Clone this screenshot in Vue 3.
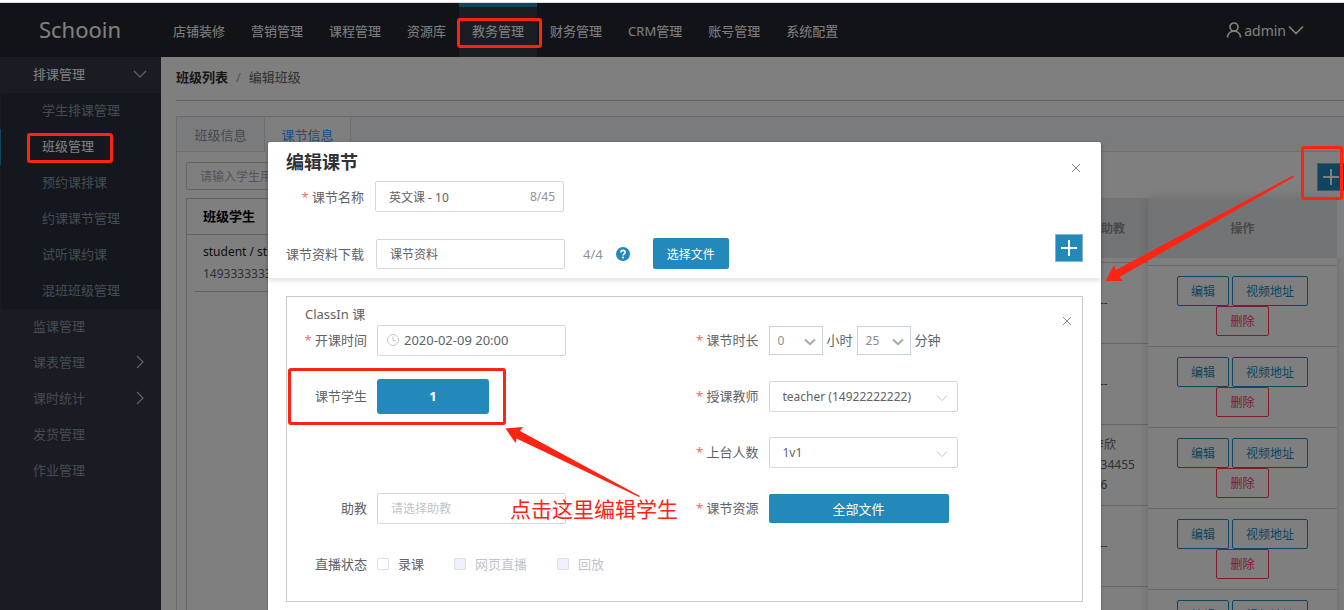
<script setup>
import { ref } from 'vue'

const navItems = ['店铺装修', '营销管理', '课程管理', '资源库', '教务管理', '财务管理', 'CRM管理', '账号管理', '系统配置']
const activeNav = '教务管理'

const subItems = ['学生排课管理', '班级管理', '预约课排课', '约课课节管理', '试听课约课', '混班班级管理']
const activeSub = '班级管理'
const sideItems = [
  { name: '监课管理', more: false },
  { name: '课表管理', more: true },
  { name: '课时统计', more: true },
  { name: '发货管理', more: false },
  { name: '作业管理', more: false },
]

const assistants = [[], [], ['韩梓欣', '15034455', '5566'], [], []]

const lessonName = ref('英文课 - 10')
const material = ref('课节资料')
const startTime = ref('2020-02-09 20:00')
const hours = ref('0')
const minutes = ref('25')
const teacher = ref('teacher (14922222222)')
const onStage = ref('1v1')
const assistant = ref('')
const record = ref(false)
</script>

<template>
  <div class="app">
    <div class="strip"></div>
    <div class="screen">
      <header class="top">
        <div class="logo">Schooin</div>
        <nav class="nav">
          <a v-for="n in navItems" :key="n" href="#" :class="{ on: n === activeNav }">{{ n }}</a>
        </nav>
        <button class="user" type="button">
          <svg width="16" height="16" viewBox="0 0 16 16" fill="none" stroke="currentColor" stroke-width="1.700">
            <circle cx="8" cy="5" r="4" />
            <path d="M1.500 15.500C1.500 11.500 4.500 9 8 9S14.500 11.500 14.500 15.500" />
          </svg>
          <span>admin</span>
          <svg width="16" height="10" viewBox="0 0 16 10" fill="none" stroke="currentColor" stroke-width="1.700">
            <path d="M1 1.500L8 8.500L15 1.500" />
          </svg>
        </button>
      </header>

      <div class="frame">
        <aside class="side">
          <a href="#" class="item open">
            <span>排课管理</span>
            <svg width="14" height="14" viewBox="0 0 14 14" fill="none" stroke="currentColor" stroke-width="1.200">
              <path d="M1 4L7 10L13 4" />
            </svg>
          </a>
          <div class="sub">
            <a v-for="s in subItems" :key="s" href="#" :class="{ on: s === activeSub }">{{ s }}</a>
          </div>
          <a v-for="s in sideItems" :key="s.name" href="#" class="item">
            <span>{{ s.name }}</span>
            <svg v-if="s.more" width="14" height="14" viewBox="0 0 14 14" fill="none" stroke="currentColor" stroke-width="1.200">
              <path d="M4 1L10 7L4 13" />
            </svg>
          </a>
        </aside>

        <main class="main">
          <div class="crumbs"><b>班级列表</b><i>/</i><span>编辑班级</span></div>
          <section class="tabs">
            <div class="tabbar">
              <button type="button">班级信息</button>
              <button type="button" class="on">课节信息</button>
            </div>
            <div class="pane">
              <div class="tools">
                <input type="text" class="search" placeholder="请输入学生用户名" aria-label="请输入学生用户名" />
                <button type="button" class="plus" aria-label="+">
                  <svg width="18" height="18" viewBox="0 0 18 18" stroke="currentColor" stroke-width="2"><path d="M9 1V17M1 9H17" /></svg>
                </button>
              </div>
              <div class="content">
                <div class="card">
                  <h3>班级学生</h3>
                  <div class="student">
                    <div>student / student</div>
                    <div class="phone">14933333333</div>
                  </div>
                </div>
                <table class="grid scroll">
                  <colgroup><col /><col class="c-assist" /></colgroup>
                  <thead><tr><th></th><th>助教</th></tr></thead>
                  <tbody>
                    <tr class="spacer"><td colspan="2"></td></tr>
                    <tr v-for="(a, i) in assistants" :key="i">
                      <td></td>
                      <td>
                        <div v-for="line in a" :key="line">{{ line }}</div>
                        <div v-if="!a.length" class="none">--</div>
                      </td>
                    </tr>
                  </tbody>
                </table>
                <table class="grid pinned">
                  <thead><tr><th>操作</th></tr></thead>
                  <tbody>
                    <tr class="spacer"><td></td></tr>
                    <tr v-for="(a, i) in assistants" :key="i">
                      <td>
                        <div class="acts">
                          <button type="button">编辑</button>
                          <button type="button">视频地址</button>
                          <button type="button" class="del">删除</button>
                        </div>
                      </td>
                    </tr>
                  </tbody>
                </table>
                <div class="gutter"></div>
              </div>
            </div>
          </section>
        </main>
      </div>

      <div class="overlay">
        <div class="modal" role="dialog" aria-labelledby="dlg-title">
          <div class="head">
            <div class="fields">
              <h2 id="dlg-title">编辑课节</h2>
              <div class="line">
                <label for="name"><em>*</em> 课节名称</label>
                <div class="box">
                  <input id="name" v-model="lessonName" type="text" class="ctl" />
                  <span class="count">8/45</span>
                </div>
              </div>
              <div class="line second">
                <label for="material">课节资料下载</label>
                <div class="box"><input id="material" v-model="material" type="text" class="ctl" /></div>
                <span class="total">4/4</span>
                <svg class="help" width="14" height="14" viewBox="0 0 14 14" fill="none">
                  <circle cx="7" cy="7" r="7" fill="#2289ba" />
                  <path d="M4.900 5.500C4.900 2.700 9.200 2.800 9.200 5.300C9.200 6.800 7 6.800 7 8.500" stroke="#fff" stroke-width="1.600" />
                  <circle cx="7" cy="10.600" r="1" fill="#fff" />
                </svg>
                <button type="button" class="solid pick">选择文件</button>
              </div>
            </div>
            <div class="sidecol">
              <button type="button" class="close" aria-label="×">
                <svg width="14" height="14" viewBox="0 0 14 14" fill="none" stroke="currentColor"><path d="M3 3L11 11M11 3L3 11" /></svg>
              </button>
              <button type="button" class="plus" aria-label="+">
                <svg width="18" height="18" viewBox="0 0 18 18" stroke="currentColor" stroke-width="2"><path d="M9 1V17M1 9H17" /></svg>
              </button>
            </div>
          </div>

          <div class="panel">
            <button type="button" class="close inner" aria-label="×">
              <svg width="14" height="14" viewBox="0 0 14 14" fill="none" stroke="currentColor"><path d="M3 3L11 11M11 3L3 11" /></svg>
            </button>
            <div class="kind">ClassIn 课</div>
            <div class="form">
              <div class="field">
                <label for="start"><em>*</em> 开课时间</label>
                <div class="box">
                  <svg class="clock" width="12" height="12" viewBox="0 0 12 12" fill="none" stroke="#c0c4cc">
                    <circle cx="6" cy="6" r="5.500" /><path d="M6 2.500V6.500H9" />
                  </svg>
                  <input id="start" v-model="startTime" type="text" class="ctl date" />
                </div>
              </div>
              <div class="field r">
                <label for="hours"><em>*</em> 课节时长</label>
                <div class="box small">
                  <select id="hours" v-model="hours" class="ctl"><option>0</option><option>1</option></select>
                  <svg width="12" height="8" viewBox="0 0 12 8" fill="none" stroke="#a6a9b0" stroke-width="2"><path d="M1 1.500L6 6.200L11 1.500" /></svg>
                </div>
                <label class="unit" for="hours">小时</label>
                <div class="box small">
                  <select id="minutes" v-model="minutes" class="ctl"><option>25</option><option>30</option></select>
                  <svg width="12" height="8" viewBox="0 0 12 8" fill="none" stroke="#a6a9b0" stroke-width="2"><path d="M1 1.500L6 6.200L11 1.500" /></svg>
                </div>
                <label class="unit" for="minutes">分钟</label>
              </div>

              <div class="field">
                <label for="students">课节学生</label>
                <button id="students" type="button" class="solid students">1</button>
              </div>
              <div class="field r">
                <label for="teacher"><em>*</em> 授课教师</label>
                <div class="box">
                  <select id="teacher" v-model="teacher" class="ctl"><option>teacher (14922222222)</option></select>
                  <svg width="12" height="8" viewBox="0 0 12 8" fill="none" stroke="#c0c4cc"><path d="M1 1.500L6 6.500L11 1.500" /></svg>
                </div>
              </div>

              <div class="field"></div>
              <div class="field r">
                <label for="stage"><em>*</em> 上台人数</label>
                <div class="box">
                  <select id="stage" v-model="onStage" class="ctl"><option>1v1</option></select>
                  <svg width="12" height="8" viewBox="0 0 12 8" fill="none" stroke="#c0c4cc"><path d="M1 1.500L6 6.500L11 1.500" /></svg>
                </div>
              </div>

              <div class="field">
                <label for="assistant">助教</label>
                <div class="box">
                  <select id="assistant" v-model="assistant" class="ctl empty"><option value="">请选择助教</option></select>
                  <svg width="12" height="8" viewBox="0 0 12 8" fill="none" stroke="#c0c4cc"><path d="M1 1.500L6 6.500L11 1.500" /></svg>
                </div>
              </div>
              <div class="field r">
                <label for="files"><em>*</em> 课节资源</label>
                <button id="files" type="button" class="solid files">全部文件</button>
              </div>

              <div class="field" role="group" aria-labelledby="live">
                <span id="live" class="lbl">直播状态</span>
                <div class="checks">
                  <label><input v-model="record" type="checkbox" />录课</label>
                  <label class="off"><input type="checkbox" disabled />网页直播</label>
                  <label class="off"><input type="checkbox" disabled />回放</label>
                </div>
              </div>
            </div>
          </div>
        </div>
      </div>
    </div>

    <div class="mark m-nav"></div>
    <div class="mark m-side"></div>
    <div class="mark m-add"></div>
    <div class="mark m-students"></div>
    <svg class="arrow a-add" width="190" height="108" viewBox="0 0 190 108" fill="#ff2314">
      <path d="M0.500 107L9 91L11 96L188 1.500L189 3L14.500 103L18 107Z" />
    </svg>
    <svg class="arrow a-students" width="136" height="72" viewBox="0 0 136 72" fill="#ff2314">
      <path d="M0.500 2.500L18 1L15 5L135 70L134 71L11.500 12.500L10.500 17Z" />
    </svg>
    <div class="hint">点击这里编辑学生</div>
  </div>
</template>

<style>
html,
body {
  margin: 0;
  overflow: hidden;
}
</style>

<style scoped>
* {
  box-sizing: border-box;
}
.app {
  position: relative;
  display: flex;
  flex-direction: column;
  height: 100vh;
  overflow: hidden;
  background: #fff;
  font-family: "Noto Sans", "Noto Sans CJK SC", sans-serif;
  font-size: 13px;
  line-height: 18px;
  color: #606266;
}
button,
input,
select {
  font-family: inherit;
  font-size: 12px;
  margin: 0;
}
button {
  padding: 0;
  border: 0;
  background: none;
  cursor: pointer;
  white-space: nowrap;
}
a {
  text-decoration: none;
  color: inherit;
}
svg {
  display: block;
  flex: none;
}
.strip {
  flex: none;
  height: 3px;
  border-bottom: 1px solid #dcdcdc;
}
.screen {
  position: relative;
  flex: 1;
  min-height: 0;
  display: flex;
  flex-direction: column;
  overflow: hidden;
}

/* top bar */
.top {
  flex: none;
  display: flex;
  align-items: stretch;
  height: 54px;
  background: #24272e;
  color: #fff;
}
.logo {
  width: 160px;
  text-align: center;
  font-size: 22px;
  line-height: 52px;
}
.nav {
  flex: 1;
  display: flex;
}
.nav a {
  padding: 0 13px;
  border-top: 4px solid transparent;
  line-height: 48px;
}
.nav a.on {
  background: #343c46;
  border-top-color: #2289ba;
}
.user {
  display: flex;
  align-items: center;
  gap: 2px;
  margin-right: 40px;
  color: #fff;
  font-size: 14px;
}

/* side menu */
.frame {
  flex: 1;
  min-height: 0;
  display: flex;
}
.side {
  flex: none;
  width: 161px;
  background: #363746;
  color: #8799a3;
}
.item {
  display: flex;
  justify-content: space-between;
  align-items: center;
  height: 36px;
  padding: 0 14px 2px 33px;
}
.item svg {
  color: #c4c8cc;
}
.item.open {
  color: #fff;
}
.sub {
  background: #28303c;
}
.sub a {
  display: block;
  padding: 0 0 2px 41px;
  border-left: 1px solid #363746;
  line-height: 34px;
}
.sub a.on {
  color: #fff;
  border-left-color: #2289ba;
}

/* page */
.main {
  flex: 1;
  min-width: 0;
  padding-left: 15px;
}
.crumbs {
  display: flex;
  height: 44px;
  line-height: 40px;
  border-bottom: 1px solid #c8c8c8;
  color: #606266;
}
.crumbs b {
  color: #303133;
}
.crumbs i {
  margin: 0 8px;
  font-style: normal;
  color: #a0a4ac;
}
.tabs {
  margin-top: 15px;
  border: 1px solid #d4d6dc;
  border-width: 1px 0 0 1px;
}
.tabbar {
  display: flex;
  height: 35px;
  background: #f5f7fa;
  border-bottom: 1px solid #dcdfe6;
}
.tabbar button {
  width: 87px;
  font-size: 13px;
  color: #909399;
}
.tabbar .on {
  height: 35px;
  background: #fff;
  color: #409eff;
  border: 1px solid #dcdfe6;
  border-width: 0 1px;
}
.pane {
  padding-left: 9px;
}
.tools {
  display: flex;
  justify-content: space-between;
  height: 46px;
  padding-top: 10px;
}
.search {
  width: 200px;
  height: 28px;
  padding: 0 13px;
  border: 1px solid #c8cad0;
  border-radius: 2px;
  background: #fff;
}
.search::placeholder {
  color: #a8abb2;
}
.plus {
  flex: none;
  display: grid;
  place-items: center;
  width: 28px;
  height: 28px;
  background: #2289ba;
  border: 1px solid #7fb4d2;
  color: #fff;
}
.tools .plus {
  margin: 1px -1px 0 0;
}
.content {
  display: grid;
  grid-template-columns: 300px 1fr 189px 7px;
  align-items: start;
}
.card {
  height: 480px;
  border: 1px solid #c8c8c8;
}
.card h3 {
  margin: 0;
  padding-left: 16px;
  border-bottom: 1px solid #c8c8c8;
  font-size: 13px;
  line-height: 35px;
  color: #000;
}
.student {
  margin-left: 7px;
  padding: 6px 9px;
  border-bottom: 1px solid #c8c8c8;
  font-size: 12px;
  line-height: 22px;
  color: #202124;
}
.phone {
  color: #606266;
}
.grid {
  width: 100%;
  border-collapse: separate;
  border-spacing: 0;
  table-layout: fixed;
  font-size: 12px;
  line-height: 20px;
  background: #fff;
}
.grid th {
  height: 60px;
  padding: 2px 0 0;
  background: #e6e8eb;
  color: #909399;
}
.grid td {
  height: 81px;
  padding: 0 2px;
  border-top: 1px solid #d0d0d0;
}
.grid .spacer td {
  border: 0;
}
.scroll .spacer td {
  height: 4px;
}
.pinned .spacer td {
  height: 7px;
}
.c-assist {
  width: 70px;
}
.none {
  padding-left: 20px;
}
.pinned {
  position: relative;
  box-shadow: 0 0 10px rgba(0, 0, 0, 0.16);
}
.acts {
  display: flex;
  flex-wrap: wrap;
  justify-content: center;
  column-gap: 3px;
  padding: 0 20px;
}
.acts button {
  height: 30px;
  padding: 0 13px;
  border: 1px solid #2289ba;
  border-radius: 2px;
  color: #2289ba;
}
.acts .del {
  border-color: #f8385c;
  color: #f8385c;
}
.gutter {
  position: relative;
  height: 60px;
  background: #fff;
}

/* dialog */
.overlay {
  position: absolute;
  inset: 0;
  z-index: 2;
  padding: 139px 243px 0 268px;
  background: rgba(0, 0, 0, 0.5);
}
.modal {
  padding-bottom: 30px;
  border-radius: 2px;
  background: #fff;
  box-shadow: 0 1px 3px rgba(0, 0, 0, 0.3);
}
.head {
  display: flex;
  justify-content: space-between;
  padding: 8px 18px 9px;
  box-shadow: 0 2px 6px rgba(0, 0, 0, 0.14);
}
h2 {
  margin: 0 0 7px;
  font-size: 18px;
  line-height: 24px;
  color: #303133;
}
.line {
  display: flex;
  align-items: center;
}
.line > label {
  width: 78px;
  margin-right: 11px;
  text-align: right;
  white-space: nowrap;
}
em {
  font-style: normal;
  color: #f56c6c;
}
.second {
  margin-top: 26px;
}
.line.second > label {
  margin-right: 12px;
}
.box {
  position: relative;
  width: 189px;
}
.ctl {
  display: block;
  width: 100%;
  height: 31px;
  padding: 0 13px;
  border: 1px solid #d4d6d9;
  border-radius: 2px;
  background: #fff;
  color: #606266;
  appearance: none;
  outline: none;
}
.second .ctl {
  height: 30px;
}
.count {
  position: absolute;
  top: 7px;
  right: 9px;
  font-size: 12px;
  color: #909399;
}
.total {
  margin: 0 13px 0 18px;
  color: #909399;
}
.solid {
  border-radius: 2px;
  background: #2289ba;
  color: #fff;
}
.pick {
  width: 76px;
  height: 31px;
  margin-left: 23px;
}
.sidecol {
  display: flex;
  flex-direction: column;
  align-items: flex-end;
  justify-content: space-between;
  padding: 11px 0 7px;
}
.close {
  color: #909399;
}
.panel {
  position: relative;
  margin: 18px 18px 0;
  padding: 8px 0 21px;
  border: 1px solid #c8c9cc;
}
.inner {
  position: absolute;
  top: 17px;
  right: 8px;
}
.kind {
  margin: 0 0 1px 18px;
}
.form {
  display: grid;
  grid-template-columns: 1fr 1fr;
  grid-auto-rows: 32px;
  row-gap: 24px;
}
.field {
  display: flex;
  align-items: center;
}
.field > label:first-child,
.lbl {
  width: 80px;
  margin-right: 10px;
  text-align: right;
  white-space: nowrap;
}
.field.r > label:first-child {
  width: 74px;
}
.box > svg {
  position: absolute;
  top: 13px;
  right: 10px;
  pointer-events: none;
}
.box > .clock {
  top: 9px;
  left: 10px;
}
.date {
  padding-left: 26px;
  font-size: 13px;
}
.small {
  width: 54px;
}
.small .ctl {
  height: 29px;
  padding: 0 8px;
  border-color: #c8d0dc;
  border-radius: 0;
  color: #8a8d93;
}
.small > svg {
  top: 12px;
  right: 7px;
}
.unit {
  margin: 0 4px;
}
.empty {
  color: #c0c4cc;
}
.students {
  width: 112px;
  height: 35px;
  border-radius: 3px;
  font-size: 13px;
  font-weight: bold;
}
.files {
  width: 180px;
  height: 29px;
  font-size: 13px;
}
.checks {
  display: flex;
  gap: 30px;
}
.checks label {
  display: flex;
  align-items: center;
  gap: 9px;
}
.checks input {
  appearance: none;
  width: 12px;
  height: 12px;
  border: 1px solid #dcdfe6;
  border-radius: 1px;
  background: #fff;
}
.checks .off {
  color: #c0c4cc;
}
.checks .off input {
  background: #edf2fc;
}

/* callouts drawn over the page */
.mark {
  position: absolute;
  z-index: 3;
  border: 3px solid #ff2314;
  border-radius: 3px;
  pointer-events: none;
}
.m-nav {
  left: 457px;
  top: 18px;
  width: 85px;
  height: 30px;
}
.m-side {
  left: 27px;
  top: 133px;
  width: 86px;
  height: 30px;
}
.m-add {
  right: 1px;
  top: 146px;
  width: 42px;
  height: 54px;
}
.m-students {
  left: 288px;
  top: 368px;
  width: 218px;
  height: 57px;
}
.arrow {
  position: absolute;
  z-index: 3;
  pointer-events: none;
}
.a-add {
  left: 1105px;
  top: 174px;
}
.a-students {
  left: 505px;
  top: 426px;
}
.hint {
  position: absolute;
  z-index: 3;
  left: 510px;
  top: 494px;
  font-size: 21px;
  line-height: 30px;
  color: #ff2314;
  white-space: nowrap;
}
</style>
